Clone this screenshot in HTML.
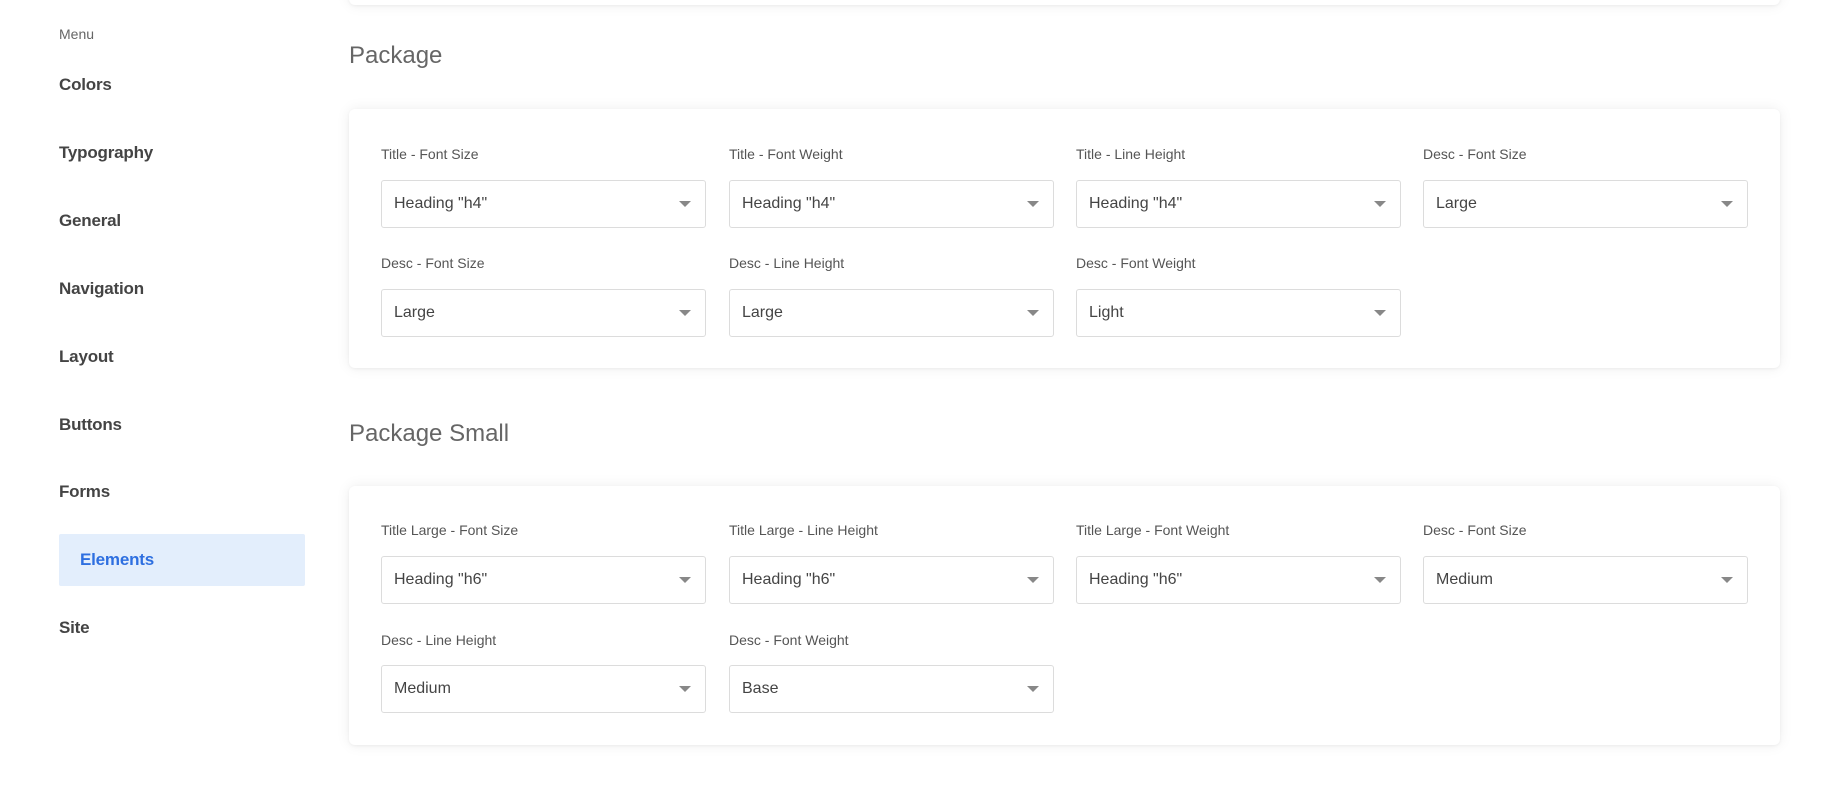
<!DOCTYPE html>
<html><head><style>
*{box-sizing:border-box;margin:0;padding:0}
body{width:1840px;height:788px;background:#fff;font-family:"Liberation Sans",Arial,sans-serif;position:relative;overflow:hidden;color:#333}
.abs{position:absolute}
.menu{left:59px;top:26px;font-size:14px;color:#666}
.item{left:59px;font-size:17px;font-weight:bold;color:#444;letter-spacing:-.2px}
.hl{left:59px;top:534px;width:246px;height:52px;background:#e3eefc;border-radius:2px}
.h{left:349px;font-size:24px;color:#666;font-weight:300}
.card{left:349px;width:1431px;height:259px;background:#fff;border-radius:6px;box-shadow:0 0 14px rgba(0,0,0,.07),0 1px 3px rgba(0,0,0,.05)}
.lbl{font-size:14px;color:#555;position:absolute}
.sel{position:absolute;width:325px;height:48px;border:1px solid #dcdcdc;border-radius:3px;font-size:16px;color:#444;padding:0 12px;line-height:46px}
.sel:after{content:"";position:absolute;right:14px;top:20px;border-left:6px solid transparent;border-right:6px solid transparent;border-top:6px solid #888}
</style></head><body>
<div class="abs card" style="top:-60px;height:65px"></div>
<div class="abs menu">Menu</div>
<div class="abs item" style="top:75px">Colors</div>
<div class="abs item" style="top:143px">Typography</div>
<div class="abs item" style="top:211px">General</div>
<div class="abs item" style="top:279px">Navigation</div>
<div class="abs item" style="top:347px">Layout</div>
<div class="abs item" style="top:415px">Buttons</div>
<div class="abs item" style="top:482px">Forms</div>
<div class="abs hl"></div>
<div class="abs item" style="top:550px;left:80px;color:#2e6fe0">Elements</div>
<div class="abs item" style="top:618px">Site</div>

<div class="abs h" style="top:42px">Package</div>
<div class="abs card" style="top:109px"></div>
<div class="abs h" style="top:420px">Package Small</div>
<div class="abs card" style="top:486px"></div>

<div class="lbl" style="left:381px;top:146px">Title - Font Size</div>
<div class="lbl" style="left:729px;top:146px">Title - Font Weight</div>
<div class="lbl" style="left:1076px;top:146px">Title - Line Height</div>
<div class="lbl" style="left:1423px;top:146px">Desc - Font Size</div>
<div class="sel" style="left:381px;top:180px">Heading "h4"</div>
<div class="sel" style="left:729px;top:180px">Heading "h4"</div>
<div class="sel" style="left:1076px;top:180px">Heading "h4"</div>
<div class="sel" style="left:1423px;top:180px">Large</div>
<div class="lbl" style="left:381px;top:255px">Desc - Font Size</div>
<div class="lbl" style="left:729px;top:255px">Desc - Line Height</div>
<div class="lbl" style="left:1076px;top:255px">Desc - Font Weight</div>
<div class="sel" style="left:381px;top:289px">Large</div>
<div class="sel" style="left:729px;top:289px">Large</div>
<div class="sel" style="left:1076px;top:289px">Light</div>

<div class="lbl" style="left:381px;top:522px">Title Large - Font Size</div>
<div class="lbl" style="left:729px;top:522px">Title Large - Line Height</div>
<div class="lbl" style="left:1076px;top:522px">Title Large - Font Weight</div>
<div class="lbl" style="left:1423px;top:522px">Desc - Font Size</div>
<div class="sel" style="left:381px;top:556px">Heading "h6"</div>
<div class="sel" style="left:729px;top:556px">Heading "h6"</div>
<div class="sel" style="left:1076px;top:556px">Heading "h6"</div>
<div class="sel" style="left:1423px;top:556px">Medium</div>
<div class="lbl" style="left:381px;top:632px">Desc - Line Height</div>
<div class="lbl" style="left:729px;top:632px">Desc - Font Weight</div>
<div class="sel" style="left:381px;top:665px">Medium</div>
<div class="sel" style="left:729px;top:665px">Base</div>
</body></html>
